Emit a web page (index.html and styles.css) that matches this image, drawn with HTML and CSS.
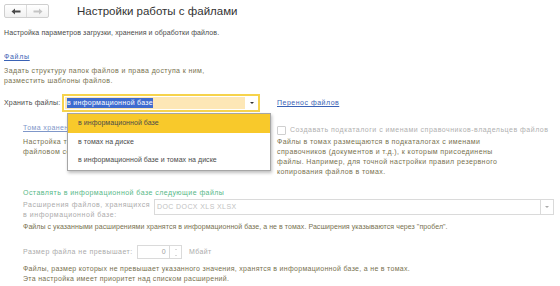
FILE: index.html
```html
<!DOCTYPE html>
<html lang="ru">
  <head>
    <meta charset="UTF-8" />
    <title>Настройки работы с файлами</title>
    <link rel="stylesheet" href="styles.css">
  </head>
  <body>
    <div class="page">
      <div class="head">
        <div class="nav">
          <span class="navBtn">
            <svg width="10" height="7" viewBox="0 0 10 7"><path d="M0.5 3.5 L4 0.5 L4 2.6 L9.5 2.6 L9.5 4.4 L4 4.4 L4 6.5 Z" fill="#4a4a4a"/></svg>
          </span>
          <span class="navBtn">
            <svg width="10" height="7" viewBox="0 0 10 7"><path d="M9.5 3.5 L6 0.5 L6 2.6 L0.5 2.6 L0.5 4.4 L6 4.4 L6 6.5 Z" fill="#c4c4c4"/></svg>
          </span>
        </div>
        <h1>Настройки работы с файлами</h1>
      </div>

      <p class="intro">Настройка параметров загрузки, хранения и обработки файлов.</p>

      <a href="" class="link filesLink">Файлы</a>
      <p class="hint">Задать структуру папок файлов и права доступа к ним,<br>разместить шаблоны файлов.</p>

      <div class="storeRow">
        <span class="label storeLabel">Хранить файлы:</span>
        <div class="combo">
          <div class="comboField"><span class="selected">в информационной базе</span></div>
          <span class="comboBtn"><span class="tri"></span></span>
          <ul class="dropdown">
            <li class="active">в информационной базе</li>
            <li>в томах на диске</li>
            <li>в информационной базе и томах на диске</li>
          </ul>
        </div>
        <a href="" class="link moveLink">Перенос файлов</a>
      </div>

      <div class="volumes">
        <div class="volLeft">
          <a href="" class="link faded">Тома хранения файлов</a>
          <p class="hint">Настройка томов хранения файлов на<br>файловом сервере.</p>
        </div>
        <div class="volRight">
          <label class="check"><span class="box"></span>Создавать подкаталоги с именами справочников-владельцев файлов</label>
          <p class="hint">Файлы в томах размещаются в подкаталогах с именами<br>справочников (документов и т.д.), к которым присоединены<br>файлы. Например, для точной настройки правил резервного<br>копирования файлов в томах.</p>
        </div>
      </div>

      <div class="keep">
        <div class="green">Оставлять в информационной базе следующие файлы</div>
        <div class="extRow">
          <span class="label disabled">Расширения файлов, хранящихся<br>в информационной базе:</span>
          <div class="extInput">
            <span class="extText">DOC DOCX XLS XLSX</span>
            <span class="extBtn"><span class="tri light"></span></span>
          </div>
        </div>
        <p class="hint extHint">Файлы с указанными расширениями хранятся в информационной базе, а не в томах. Расширения указываются через "пробел".</p>
        <div class="sizeRow">
          <span class="label disabled">Размер файла не превышает:</span>
          <div class="spin">
            <span class="spinValue">0</span>
            <span class="spinBtns"><span class="up"></span><span class="down"></span></span>
          </div>
          <span class="label disabled">Мбайт</span>
        </div>
        <p class="hint sizeHint">Файлы, размер которых не превышает указанного значения, хранятся в информационной базе, а не в томах.<br>Эта настройка имеет приоритет над списком расширений.</p>
      </div>
    </div>
  </body>
</html>
```

FILE: styles.css
```css
body {
  margin: 0;
  background-color: #fff;
  font-family: "Liberation Sans", Arial, sans-serif;
  font-size: 7px;
  line-height: 10px;
  letter-spacing: 0.4px;
  color: #4a4a4a;
}
.page {
  padding: 4px 0 0 4px;
  width: 552px;
}

.head {
  display: flex;
  align-items: center;
  height: 14px;
}
.nav {
  display: flex;
  width: 45px;
  height: 14px;
  box-sizing: border-box;
  border: 1px solid #cfcfcf;
  border-radius: 2px;
  background: linear-gradient(#ffffff, #f1f1f1);
}
.navBtn {
  flex: 1;
  display: flex;
  justify-content: center;
  align-items: center;
}
.navBtn + .navBtn {
  border-left: 1px solid #dadada;
}
h1 {
  margin: 0 0 0 28px;
  font-size: 11.5px;
  font-weight: normal;
  letter-spacing: 0;
  color: #333;
  line-height: 14px;
}

p {
  margin: 0;
}
.intro {
  margin-top: 10px;
  letter-spacing: 0.1px;
}

.link {
  display: inline-block;
  color: #3a62b5;
  text-decoration: underline;
}
.filesLink {
  margin-top: 14px;
  letter-spacing: 0.7px;
}
.hint {
  color: #77714f;
}
.filesLink + .hint {
  margin-top: 4px;
}

.storeRow {
  display: flex;
  align-items: center;
  margin-top: 8px;
  height: 18px;
}
.label {
  color: #4a4a4a;
}
.storeLabel {
  width: 58px;
  letter-spacing: 0.2px;
}
.combo {
  position: relative;
  display: flex;
  width: 198px;
  height: 18px;
  box-sizing: border-box;
  border: 2px solid #f6d34c;
  background-color: #fff;
}
.comboField {
  flex: 1;
  margin: 1px 0 1px 1px;
  padding: 1px 2px;
  background-color: #fde7b6;
  display: flex;
  align-items: center;
}
.selected {
  background-color: #3e6bcf;
  color: #fff;
  line-height: 10px;
  letter-spacing: 0.3px;
}
.comboBtn {
  width: 13px;
  display: flex;
  justify-content: center;
  align-items: center;
}
.tri {
  width: 0;
  height: 0;
  border-left: 2px solid transparent;
  border-right: 2px solid transparent;
  border-top: 2px solid #333;
}
.tri.light {
  border-top-color: #aaa;
}
.dropdown {
  position: absolute;
  left: 3px;
  top: 17px;
  width: 202px;
  margin: 0;
  padding: 0;
  list-style: none;
  background-color: #fff;
  border: 1px solid #a6a6a6;
  box-shadow: 1px 2px 3px rgba(0, 0, 0, 0.25);
  z-index: 2;
}
.dropdown li {
  height: 18.5px;
  line-height: 18.5px;
  padding-left: 10px;
  letter-spacing: 0.05px;
  color: #4a4a4a;
}
.dropdown li.active {
  background-color: #f8c92b;
}
.moveLink {
  margin-left: 17px;
  letter-spacing: 0.5px;
}

.volumes {
  display: flex;
  margin-top: 11px;
}
.volLeft {
  width: 254px;
  padding-left: 19px;
}
.faded {
  color: #7f97c9;
}
.volLeft .hint {
  margin-top: 4px;
}
.check {
  display: flex;
  align-items: center;
  gap: 4px;
  color: #b0b0b0;
  margin-top: 2px;
  height: 10px;
  letter-spacing: 0.5px;
}
.box {
  width: 9px;
  height: 9px;
  box-sizing: border-box;
  border: 1px solid #cfcfcf;
  border-radius: 1px;
  background-color: #fff;
}
.volRight .hint {
  margin-top: 2px;
}

.keep {
  margin-top: 11px;
  padding-left: 19px;
}
.green {
  color: #56b887;
  letter-spacing: 0.45px;
}
.extRow {
  display: flex;
  margin-top: 1px;
}
.disabled {
  color: #ababab;
}
.extRow .label {
  width: 131px;
  line-height: 9.5px;
  margin-top: 1px;
  letter-spacing: 0.55px;
}
.extInput {
  flex: 1;
  display: flex;
  height: 16px;
  box-sizing: border-box;
  border: 1px solid #dadada;
  margin-right: 2px;
}
.extText {
  flex: 1;
  padding-left: 2px;
  line-height: 14px;
  color: #c2c2c2;
}
.extBtn {
  width: 12px;
  border-left: 1px solid #dadada;
  display: flex;
  justify-content: center;
  align-items: center;
}
.extHint {
  margin-top: 3px;
  letter-spacing: 0.06px;
}
.sizeRow {
  display: flex;
  align-items: center;
  margin-top: 13px;
  height: 14px;
}
.sizeRow .label:first-child {
  width: 111px;
  letter-spacing: 0.45px;
}
.spin {
  display: flex;
  width: 45px;
  height: 14px;
  box-sizing: border-box;
  margin-left: 3px;
  border: 1px solid #dadada;
}
.spinValue {
  flex: 1;
  text-align: right;
  padding-right: 3px;
  line-height: 12px;
  color: #a0a0a0;
}
.spinBtns {
  width: 11px;
  border-left: 1px solid #dadada;
  display: flex;
  flex-direction: column;
  justify-content: space-around;
  align-items: center;
}
.up,
.down {
  width: 0;
  height: 0;
  border-left: 1.5px solid transparent;
  border-right: 1.5px solid transparent;
}
.up {
  border-bottom: 1.5px solid #b5b5b5;
}
.down {
  border-top: 1.5px solid #b5b5b5;
}
.sizeRow .label:last-child {
  margin-left: 7px;
}
.sizeHint {
  margin-top: 5px;
  letter-spacing: 0.3px;
}
```
